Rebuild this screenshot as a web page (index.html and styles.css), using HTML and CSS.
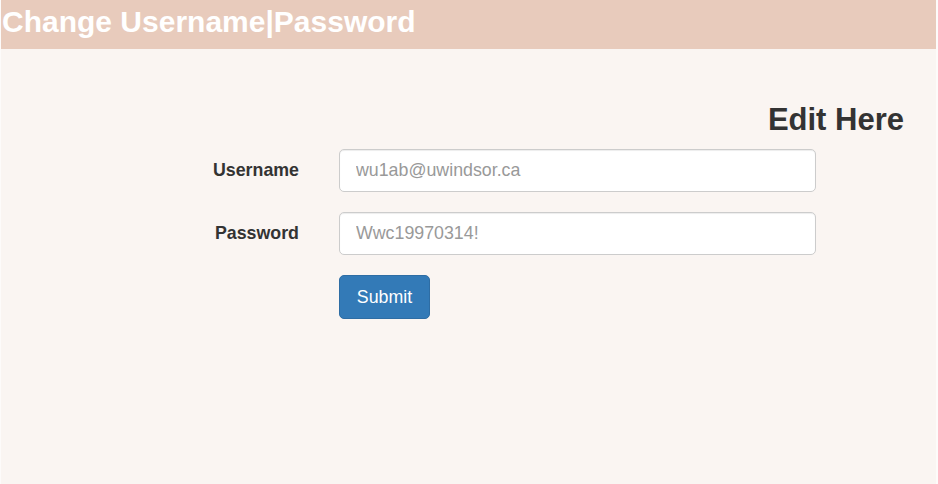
FILE: index.html
```html
<!DOCTYPE html>
<html lang="en">
<head>
<meta charset="utf-8">
<title>Change Username|Password</title>
<link rel="stylesheet" href="styles.css">
</head>
<body>
<div class="page">
  <header class="topbar">
    <h1 class="title">Change Username|Password</h1>
  </header>
  <main class="content">
    <h3 class="edit-title">Edit Here</h3>
    <form class="form">
      <label class="label" for="username">Username</label>
      <input class="control" id="username" type="text" placeholder="wu1ab@uwindsor.ca">
      <label class="label" for="password">Password</label>
      <input class="control" id="password" type="text" placeholder="Wwc19970314!">
      <span></span>
      <div class="actions"><button class="btn" type="button">Submit</button></div>
    </form>
  </main>
</div>
</body>
</html>
```

FILE: styles.css
```css
html, body {
  margin: 0;
  padding: 0;
  height: 100%;
  background: #fdfbfa;
}
body {
  font-family: "Liberation Sans", Arial, Helvetica, sans-serif;
  color: #333;
}
.page {
  margin: 0 2px 0 1px;
  min-height: 100%;
  background: #faf5f2;
  display: flex;
  flex-direction: column;
}
.topbar {
  background: #e8cbbc;
  height: 49px;
  box-sizing: border-box;
  padding: 5px 0 0 1px;
}
.title {
  margin: 0;
  font-size: 30px;
  font-weight: bold;
  line-height: normal;
  color: #ffffff;
}
.content {
  flex: 1;
  padding: 0 32px 0 0;
}
.edit-title {
  margin: 0;
  padding-top: 53px;
  text-align: right;
  font-size: 31px;
  font-weight: bold;
  line-height: 36px;
  color: #333;
}
.form {
  margin-top: 11px;
  display: grid;
  grid-template-columns: 298px 477px;
  column-gap: 40px;
  row-gap: 20px;
  align-items: center;
}
.label {
  text-align: right;
  font-weight: bold;
  font-size: 17.8px;
  color: #333;
}
.control {
  box-sizing: border-box;
  height: 43px;
  width: 100%;
  padding: 0 16px;
  font-family: inherit;
  font-size: 17.8px;
  color: #555;
  background: #fff;
  border: 1px solid #cccccc;
  border-radius: 5px;
  box-shadow: inset 0 1px 1px rgba(0,0,0,0.075);
  outline: none;
}
.control::placeholder {
  color: #999;
}
.actions {
  display: flex;
}
.btn {
  box-sizing: border-box;
  height: 44px;
  width: 91px;
  padding: 0;
  font-family: inherit;
  font-size: 17.8px;
  color: #fff;
  background: #337ab7;
  border: 1px solid #2e6da4;
  border-radius: 5px;
  cursor: pointer;
}
```
